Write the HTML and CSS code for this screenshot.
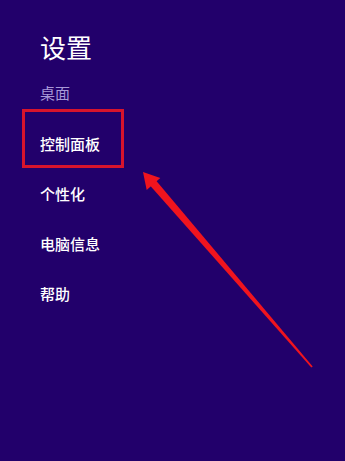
FILE: index.html
```html
<!DOCTYPE html>
<html lang="zh-CN">
<head>
<meta charset="utf-8">
<title>设置</title>
<link rel="stylesheet" href="styles.css">
</head>
<body>
<div class="pane">
  <h1 class="title">设置</h1>
  <div class="section">桌面</div>
  <ul class="menu">
    <li class="item item-marked">控制面板<span class="mark"></span></li>
    <li class="item">个性化</li>
    <li class="item">电脑信息</li>
    <li class="item">帮助</li>
  </ul>
  <svg class="arrow" width="345" height="461" viewBox="0 0 345 461" aria-hidden="true">
    <polygon points="156,180.4 150,185.6 311.3,367.6 312.7,366.4" fill="#f0141e"/>
    <polygon points="143,172 160.3,178.1 146.7,189.9" fill="#f0141e"/>
  </svg>
</div>
</body>
</html>
```
FILE: styles.css
```css
html, body {
  margin: 0;
  padding: 0;
  background: #22006b;
}
.pane {
  position: relative;
  width: 345px;
  height: 461px;
  overflow: hidden;
  padding: 32px 0 0 40px;
  box-sizing: border-box;
  font-family: "Noto Sans CJK SC", "Noto Sans", sans-serif;
  color: #ffffff;
}
.title {
  margin: 0;
  font-size: 26px;
  line-height: 30px;
  font-weight: 400;
}
.section {
  margin-top: 5px;
  height: 52px;
  line-height: 52px;
  font-size: 15px;
  color: #a898d8;
}
.menu {
  list-style: none;
  margin: 0;
  padding: 0;
  display: flex;
  flex-direction: column;
}
.item {
  height: 50px;
  line-height: 50px;
  font-size: 15px;
  font-weight: 500;
  position: relative;
}
.mark {
  position: absolute;
  left: -18px;
  top: -10px;
  width: 102px;
  height: 59px;
  box-sizing: border-box;
  border: 3px solid #d8142c;
}
.arrow {
  position: absolute;
  left: 0;
  top: 0;
  pointer-events: none;
}
```
